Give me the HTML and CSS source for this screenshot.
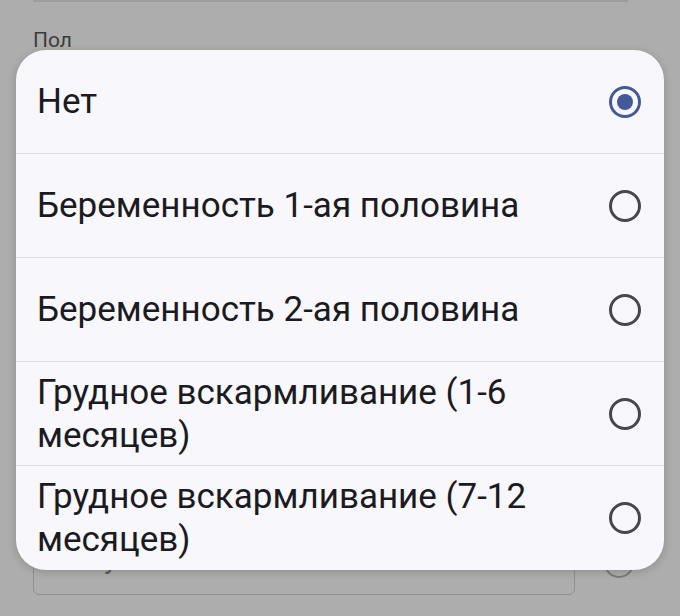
FILE: index.html
```html
<!DOCTYPE html>
<html lang="ru">
<head>
<meta charset="utf-8">
<title>Выбор</title>
<link rel="stylesheet" href="styles.css">
</head>
<body>
<div class="page">
  <div class="top-field"></div>
  <div class="label">Пол</div>
  <div class="bottom-row">
    <div class="out-field"><span class="out-text">Отсутствие активности</span></div>
    <svg class="info" width="32" height="32" viewBox="0 0 32 32"><circle cx="16" cy="16" r="14" fill="none" stroke="#7a7a7a" stroke-width="2"/><rect x="15" y="13" width="2" height="9" fill="#7a7a7a"/><rect x="15" y="9" width="2" height="2" fill="#7a7a7a"/></svg>
  </div>
</div>
<div class="dialog">
  <div class="row"><span class="txt">Нет</span><span class="radio on"></span></div>
  <div class="row"><span class="txt">Беременность 1-ая половина</span><span class="radio"></span></div>
  <div class="row"><span class="txt">Беременность 2-ая половина</span><span class="radio"></span></div>
  <div class="row"><span class="txt">Грудное вскармливание (1-6 месяцев)</span><span class="radio"></span></div>
  <div class="row last"><span class="txt">Грудное вскармливание (7-12 месяцев)</span><span class="radio"></span></div>
</div>
</body>
</html>
```
FILE: styles.css
```css
html, body {
  margin: 0;
  padding: 0;
}
body {
  width: 680px;
  height: 616px;
  background: #adadad;
  font-family: Roboto, "Noto Sans", sans-serif;
  overflow: hidden;
  position: relative;
}
.page {
  padding: 0 33px 0 33px;
}
.top-field {
  width: 595px;
  height: 2px;
  background: #9c9c9c;
}
.label {
  margin-top: 25px;
  font-size: 21px;
  line-height: 26px;
  color: #3c3c3c;
}
.bottom-row {
  margin-top: 478px;
  display: flex;
  align-items: flex-start;
  gap: 28px;
}
.out-field {
  width: 542px;
  height: 64px;
  border: 1px solid #8f8f8f;
  border-radius: 6px;
  box-sizing: border-box;
  padding: 10px 0 0 24px;
  font-size: 28px;
  color: #5e5e5e;
  white-space: nowrap;
}
.info {
  margin-top: 16px;
}
.dialog {
  position: absolute;
  left: 16px;
  top: 50px;
  width: 648px;
  height: 520px;
  background: #f7f7fc;
  border-radius: 30px;
  box-shadow: 0 2px 8px rgba(0,0,0,0.18);
  overflow: hidden;
}
.row {
  height: 104px;
  box-sizing: border-box;
  border-bottom: 1px solid #dcdce1;
  display: flex;
  align-items: center;
  justify-content: space-between;
  padding: 0 23px 0 21px;
}
.row.last {
  border-bottom: none;
}
.txt {
  font-size: 35px;
  line-height: 43px;
  color: #1b1b1f;
  max-width: 525px;
}
.radio {
  flex: none;
  width: 32px;
  height: 32px;
  box-sizing: border-box;
  border: 3px solid #46464d;
  border-radius: 50%;
  position: relative;
}
.radio.on {
  border-color: #44599a;
}
.radio.on::after {
  content: "";
  position: absolute;
  left: 5px;
  top: 5px;
  width: 16px;
  height: 16px;
  border-radius: 50%;
  background: #44599a;
}
```
